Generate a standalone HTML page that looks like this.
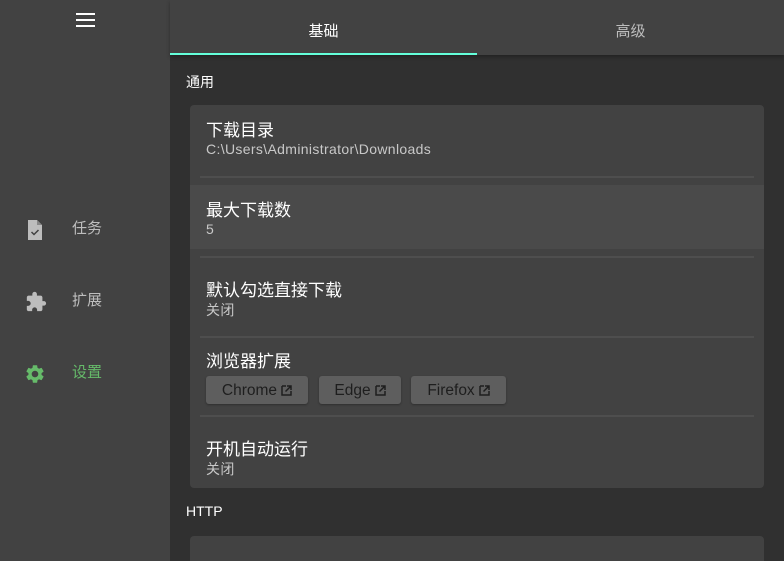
<!DOCTYPE html>
<html><head><meta charset="utf-8"><style>
*{margin:0;padding:0;box-sizing:border-box}
html,body{width:784px;height:561px;overflow:hidden}
body{background:#303030;font-family:"Liberation Sans","Noto Sans CJK SC",sans-serif;position:relative;color:#fff}
.side{position:absolute;left:0;top:0;width:170px;height:561px;background:#424242}
.tabs{position:absolute;left:170px;top:0;width:614px;height:55px;background:#424242;box-shadow:0 2px 4px rgba(0,0,0,.3)}
.tab{position:absolute;top:0;height:55px;line-height:64px;text-align:center;font-size:15px;width:307px}
.ind{position:absolute;left:0;top:53px;width:307px;height:2px;background:#64ffda}
.nav{position:absolute;left:24px;font-size:15px;color:#bdbdbd}
.nav span{position:absolute;left:48px;top:-2px;white-space:nowrap}
.abs{position:absolute}
.card{position:absolute;left:190px;width:574px;background:#424242;border-radius:4px}
.t{position:absolute;left:206px;font-size:17px;color:#fff;white-space:nowrap}
.s{position:absolute;left:206px;font-size:14px;color:#c8c8c8;white-space:nowrap;letter-spacing:.35px}
.dv{position:absolute;left:200px;width:554px;height:2px;background:#4e4e4e}
.btn{position:absolute;top:376px;height:28px;background:#5e5e5e;border-radius:3px;color:#1e1e1e;font-size:15.5px;line-height:29px;text-align:center;box-shadow:0 1px 2px rgba(0,0,0,.3)}
.btn svg{vertical-align:-1px;margin-left:4px}
</style></head><body>
<div class="side">
<div class="abs" style="left:76px;top:13px;width:19px;height:2px;background:#fff"></div>
<div class="abs" style="left:76px;top:19px;width:19px;height:2px;background:#fff"></div>
<div class="abs" style="left:76px;top:25px;width:19px;height:2px;background:#fff"></div>
<div class="nav" style="top:219px"><svg width="22" height="22" viewBox="0 0 22 22" style="position:absolute;left:0;top:0"><path d="M4 1h9l5 5v15H4z" fill="#bdbdbd"/><path d="M13 1v5h5" fill="#888"/><path d="M7.5 13l2.5 2.5 4.5-4.5" stroke="#424242" stroke-width="1.5" fill="none"/></svg><span>任务</span></div>
<div class="nav" style="top:291px"><svg width="24" height="22" viewBox="0 0 24 24" style="position:absolute;left:0;top:0"><path fill="#bdbdbd" d="M20.5 11H19V7c0-1.1-.9-2-2-2h-4V3.5C13 2.12 11.880 1 10.5 1S8 2.12 8 3.5V5H4c-1.1 0-1.99.9-1.99 2v3.8H3.5c1.49 0 2.7 1.21 2.7 2.7s-1.21 2.7-2.7 2.7H2V20c0 1.1.9 2 2 2h3.8v-1.5c0-1.49 1.21-2.7 2.7-2.7 1.49 0 2.7 1.21 2.7 2.7V22H17c1.1 0 2-.9 2-2v-4h1.5c1.38 0 2.5-1.12 2.5-2.5S21.88 11 20.5 11z"/></svg><span>扩展</span></div>
<div class="nav" style="top:363px;color:#66bb6a"><svg width="22" height="22" viewBox="0 0 24 24" style="position:absolute;left:0;top:0"><path fill="#66bb6a" d="M19.14 12.94c.04-.3.06-.61.06-.94 0-.32-.02-.64-.07-.94l2.03-1.58a.49.49 0 00.12-.61l-1.92-3.32a.488.488 0 00-.59-.22l-2.39.96c-.5-.38-1.030-.7-1.62-.94l-.36-2.54a.484.484 0 00-.48-.41h-3.84c-.24 0-.43.17-.47.41l-.36 2.54c-.59.24-1.13.57-1.62.94l-2.39-.96c-.22-.08-.47 0-.59.22L2.74 8.87c-.12.21-.08.47.12.61l2.03 1.58c-.05.3-.09.63-.09.94s.02.64.07.94l-2.03 1.58a.49.49 0 00-.12.61l1.92 3.32c.12.22.37.29.59.22l2.39-.96c.5.38 1.030.7 1.62.94l.36 2.54c.05.24.24.41.48.41h3.84c.24 0 .44-.17.47-.41l.36-2.54c.59-.24 1.13-.56 1.62-.94l2.39.96c.22.08.47 0 .59-.22l1.92-3.32c.12-.22.07-.47-.12-.61l-2.010-1.58zM12 15.6c-1.98 0-3.6-1.62-3.6-3.6s1.62-3.6 3.6-3.6 3.6 1.62 3.6 3.6-1.62 3.6-3.6 3.6z"/></svg><span>设置</span></div>
</div>
<div class="tabs">
<div class="tab" style="left:0;color:#fff">基础</div>
<div class="tab" style="left:307px;color:#bdbdbd">高级</div>
<div class="ind"></div>
</div>
<div class="abs" style="left:186px;top:72px;font-size:14px">通用</div>
<div class="card" style="top:105px;height:383px"></div>
<div class="abs" style="left:190px;top:185px;width:574px;height:64px;background:#4a4a4a"></div>
<div class="t" style="top:116px">下载目录</div>
<div class="s" style="top:141px">C:\Users\Administrator\Downloads</div>
<div class="dv" style="top:176px"></div>
<div class="t" style="top:196px">最大下载数</div>
<div class="s" style="top:221px">5</div>
<div class="dv" style="top:256px"></div>
<div class="t" style="top:276px">默认勾选直接下载</div>
<div class="s" style="top:300px">关闭</div>
<div class="dv" style="top:336px"></div>
<div class="t" style="top:347px">浏览器扩展</div>
<div class="btn" style="left:206px;width:102px">Chrome<svg width="11" height="11" viewBox="0 0 11 11"><path d="M1 1h4M1 1v9h9V6M6 1h4v4M10 1L4.5 6.5" stroke="#1e1e1e" stroke-width="1.5" fill="none"/></svg></div>
<div class="btn" style="left:319px;width:82px">Edge<svg width="11" height="11" viewBox="0 0 11 11"><path d="M1 1h4M1 1v9h9V6M6 1h4v4M10 1L4.5 6.5" stroke="#1e1e1e" stroke-width="1.5" fill="none"/></svg></div>
<div class="btn" style="left:411px;width:95px">Firefox<svg width="11" height="11" viewBox="0 0 11 11"><path d="M1 1h4M1 1v9h9V6M6 1h4v4M10 1L4.5 6.5" stroke="#1e1e1e" stroke-width="1.5" fill="none"/></svg></div>
<div class="dv" style="top:415px"></div>
<div class="t" style="top:435px">开机自动运行</div>
<div class="s" style="top:459px">关闭</div>
<div class="abs" style="left:186px;top:503px;font-size:14px">HTTP</div>
<div class="card" style="top:536px;height:25px;border-radius:4px 4px 0 0"></div>
</body></html>
